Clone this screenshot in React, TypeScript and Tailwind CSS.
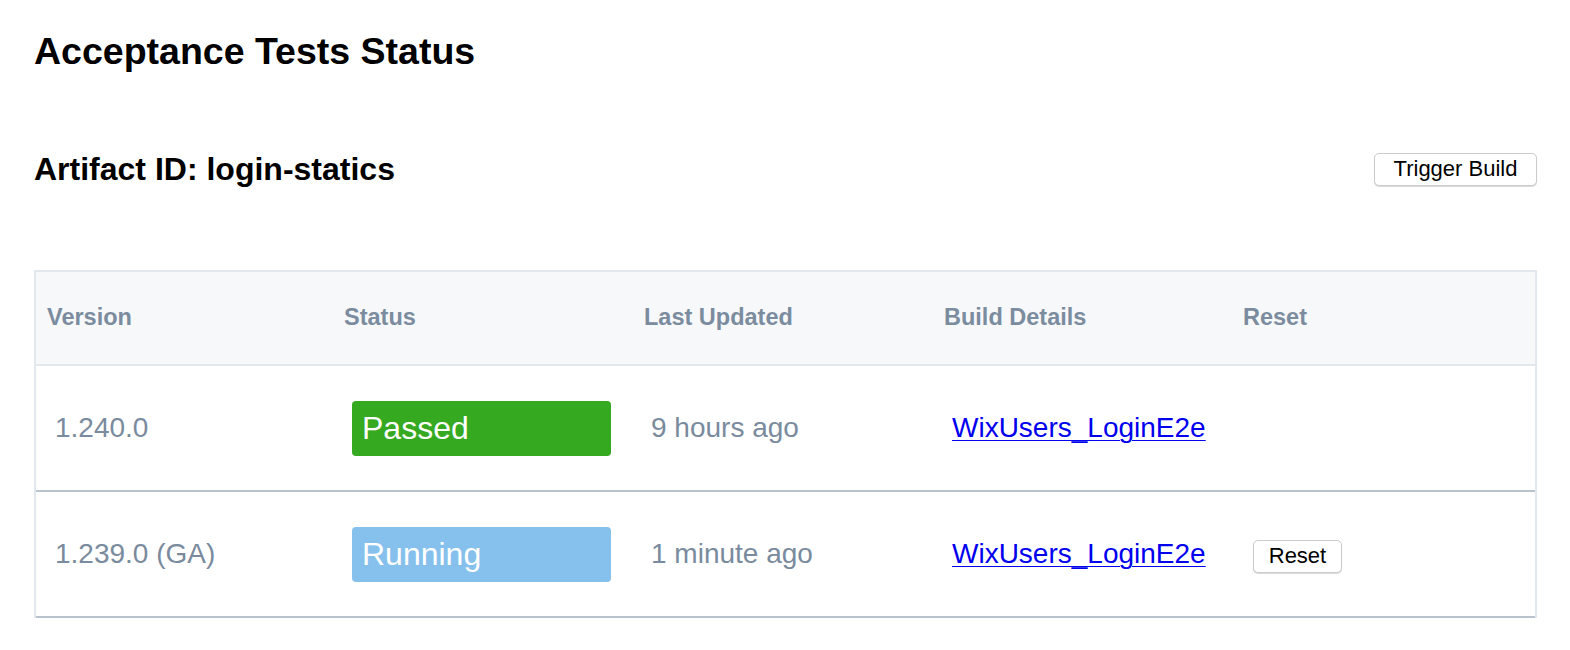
import React from "react";

const rows = [
  { version: "1.240.0", status: "Passed", updated: "9 hours ago", reset: false },
  { version: "1.239.0 (GA)", status: "Running", updated: "1 minute ago", reset: true },
];

export default function App() {
  return (
    <div
      className="min-h-[650px] bg-white pl-[34px] pr-[33px] text-black"
      style={{ fontFamily: '"Liberation Sans", Arial, Helvetica, sans-serif' }}
    >
      <h1 className="pt-[30px] text-[37.5px] font-bold leading-[42px]">Acceptance Tests Status</h1>

      <div className="mt-[79px] flex items-center justify-between">
        <h2 className="text-[32px] font-bold leading-[36px]">Artifact ID: login-statics</h2>
        <button className="h-[33px] w-[163px] rounded-[5px] border border-[#cbcbcb] bg-white text-[22px] leading-none text-black shadow-[0_1px_1px_rgba(0,0,0,0.15)]">
          Trigger Build
        </button>
      </div>

      <div className="mt-[83px] border-2 border-b-0 border-[#e3e7ee]">
        <div className="flex h-[94px] items-center border-b-2 border-[#e3e7ee] bg-[#f7f8fa] text-[23.5px] font-bold text-[#7b8c9f]">
          <div className="w-[300px] pl-[11px]">Version</div>
          <div className="w-[300px] pl-[8px]">Status</div>
          <div className="w-[300px] pl-[8px]">Last Updated</div>
          <div className="w-[300px] pl-[8px]">Build Details</div>
          <div className="w-[299px] pl-[7px]">Reset</div>
        </div>
        {rows.map((r) => (
          <div
            key={r.version}
            className="flex h-[126px] items-center border-b-2 border-[#b9c3ce] text-[28px] text-[#7a8b9e]"
          >
            <div className="w-[300px] pl-[19px]">{r.version}</div>
            <div className="w-[300px] pl-[16px]">
              <div
                className={
                  "flex h-[55px] w-[259px] items-center rounded-[4px] pl-[10px] text-[32px] text-white " +
                  (r.status === "Passed" ? "bg-[#35a91f]" : "bg-[#86c0ec]")
                }
              >
                {r.status}
              </div>
            </div>
            <div className="w-[300px] pl-[15px]">{r.updated}</div>
            <div className="w-[300px] pl-[16px]">
              <a href="#" className="text-[#0000ee] underline decoration-1 underline-offset-[3px]">
                WixUsers_LoginE2e
              </a>
            </div>
            <div className="w-[299px] pl-[17px]">
              {r.reset && (
                <button className="h-[33px] w-[89px] rounded-[5px] border border-[#cbcbcb] bg-white text-[22px] leading-none text-black shadow-[0_1px_1px_rgba(0,0,0,0.15)]">
                  Reset
                </button>
              )}
            </div>
          </div>
        ))}
      </div>
    </div>
  );
}
